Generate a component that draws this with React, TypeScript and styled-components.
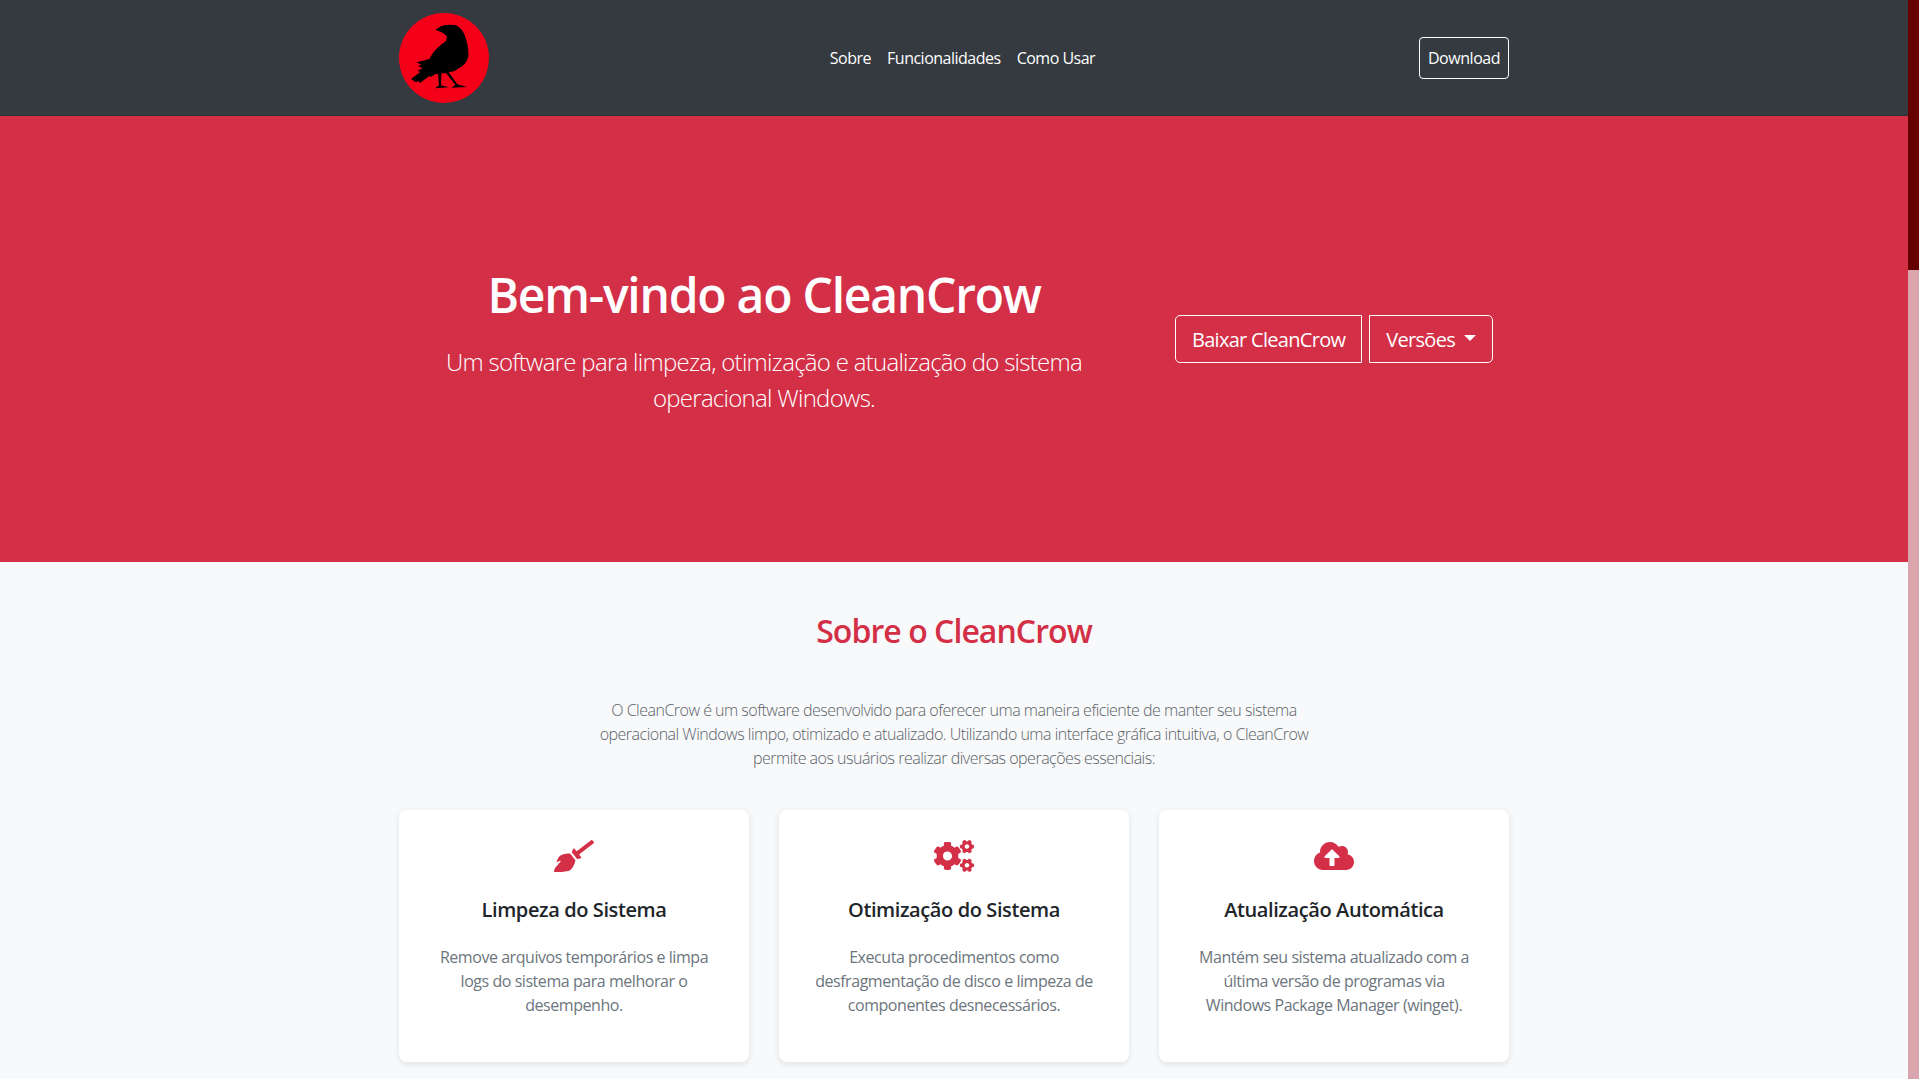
import React from 'react';
import styled, { createGlobalStyle } from 'styled-components';
import { FaBroom, FaCogs, FaCloudUploadAlt } from 'react-icons/fa';

const GlobalStyle = createGlobalStyle`
  html, body {
    margin: 0;
    height: 100%;
    overflow: hidden;
  }
  body {
    font-family: "Open Sans", "Liberation Sans", sans-serif;
    font-size: 16px;
    line-height: 1.5;
    color: #212529;
    background: #f8f9fa;
  }
  * {
    box-sizing: border-box;
  }
`;

const Shell = styled.div`
  display: flex;
  height: 100vh;
`;

const Page = styled.div`
  flex: 1;
  min-width: 0;
  overflow: hidden;
`;

const ScrollTrack = styled.div`
  width: 11px;
  flex: none;
  background: #dba5ad;
`;

const ScrollThumb = styled.div`
  height: 270px;
  background: #660000;
`;

const Container = styled.div`
  width: 1110px;
  margin: 0 auto;
`;

const Navbar = styled.nav`
  height: 116px;
  background: #343a40;
  border-bottom: 1px solid #2c3136;
`;

const NavInner = styled(Container)`
  height: 100%;
  display: flex;
  align-items: center;
  justify-content: space-between;
`;

const Logo = styled.svg`
  width: 90px;
  height: 90px;
  display: block;
`;

const NavLinks = styled.div`
  display: flex;
  gap: 16px;
  margin-left: 17px;
`;

const NavLink = styled.a`
  color: #fff;
  font-size: 16px;
  letter-spacing: -0.5px;
`;

const DownloadButton = styled.a`
  display: block;
  width: 90px;
  height: 42px;
  line-height: 40px;
  text-align: center;
  color: #fff;
  border: 1px solid #fff;
  border-radius: 4px;
  font-size: 16px;
  letter-spacing: -0.45px;
`;

const Hero = styled.header`
  height: 446px;
  background: #d32f47;
  color: #fff;
`;

const HeroInner = styled.div`
  width: 1140px;
  height: 100%;
  margin: 0 auto;
  display: grid;
  grid-template-columns: 760px 380px;
`;

const HeroText = styled.div`
  padding: 150px 15px 0;
  text-align: center;
`;

const HeroTitle = styled.h1`
  margin: 0 0 20px;
  font-size: 48px;
  line-height: 58px;
  font-weight: 600;
  letter-spacing: -1.25px;
`;

const Lead = styled.p`
  margin: 0;
  font-size: 24px;
  line-height: 36px;
  font-weight: 300;
  letter-spacing: -0.72px;
`;

const HeroActions = styled.div`
  display: flex;
  justify-content: center;
  gap: 7px;
  padding-top: 199px;
`;

const OutlineButton = styled.a<{ $side: 'left' | 'right' }>`
  display: flex;
  align-items: center;
  height: 48px;
  padding: 2px 16px 0;
  color: #fff;
  border: 1px solid #fff;
  border-radius: ${(p) => (p.$side === 'left' ? '5px 0 0 5px' : '0 5px 5px 0')};
  font-size: 20px;
  letter-spacing: -0.7px;
`;

const Caret = styled.span`
  width: 0;
  height: 0;
  margin-left: 9px;
  margin-bottom: 5px;
  border-top: 6px solid #fff;
  border-left: 6px solid transparent;
  border-right: 6px solid transparent;
`;

const About = styled.section`
  padding-top: 49px;
  background: #f8f9fa;
`;

const SectionTitle = styled.h2`
  margin: 0 0 47px;
  font-size: 32px;
  line-height: 40px;
  font-weight: 600;
  text-align: center;
  color: #d32f47;
  letter-spacing: -0.95px;
`;

const Intro = styled.p`
  width: 730px;
  margin: 0 auto 40px;
  font-size: 16px;
  line-height: 24px;
  font-weight: 300;
  text-align: center;
  color: #5a6268;
  letter-spacing: -0.5px;
`;

const CardGrid = styled(Container)`
  display: grid;
  grid-template-columns: repeat(3, 350px);
  gap: 30px;
`;

const Card = styled.article`
  height: 252px;
  padding: 24px 32px 0;
  background: #fff;
  border-radius: 8px;
  box-shadow: 0 2px 6px rgba(0, 0, 0, 0.1);
  text-align: center;
`;

const CardIcon = styled.div`
  height: 44px;
  display: flex;
  align-items: center;
  justify-content: center;
  color: #d32f47;
  font-size: 40px;
`;

const CardTitle = styled.h3`
  margin: 17px 0 20px;
  font-size: 20px;
  line-height: 30px;
  font-weight: 600;
  color: #212529;
  letter-spacing: -0.4px;
`;

const CardText = styled.p`
  margin: 0;
  font-size: 16px;
  line-height: 24px;
  color: #6c757d;
  letter-spacing: -0.45px;
`;

const features = [
  {
    icon: <FaBroom />,
    title: 'Limpeza do Sistema',
    text: 'Remove arquivos temporários e limpa logs do sistema para melhorar o desempenho.',
  },
  {
    icon: <FaCogs />,
    title: 'Otimização do Sistema',
    text: 'Executa procedimentos como desfragmentação de disco e limpeza de componentes desnecessários.',
  },
  {
    icon: <FaCloudUploadAlt />,
    title: 'Atualização Automática',
    text: 'Mantém seu sistema atualizado com a última versão de programas via Windows Package Manager (winget).',
  },
];

function CrowLogo() {
  return (
    <Logo viewBox="57 40 270 270">
      <circle cx="192" cy="175" r="135" fill="#f40018" />
      <path
        fill="#000"
        d="M166 90 L184 79 Q205 73 228 77 Q248 86 257 115 Q267 145 265 170 Q260 195 238 205
           L222 215 L206 218 L232 254 L262 262 L214 264 L226 256 L199 221 L184 221 L183 257
           L206 263 L165 266 L177 257 L174 222 L165 224 L152 232 L148 229 L120 250 L116 244 L108 248 L93 238
           L122 216 L112 214 L128 205 L114 200 L124 195 L110 188 L148 178 Q160 150 198 124 L201 110 L188 99 Z"
      />
    </Logo>
  );
}

export default function App() {
  return (
    <Shell>
      <GlobalStyle />
      <Page>
        <Navbar>
          <NavInner>
            <CrowLogo />
            <NavLinks>
              <NavLink>Sobre</NavLink>
              <NavLink>Funcionalidades</NavLink>
              <NavLink>Como Usar</NavLink>
            </NavLinks>
            <DownloadButton>Download</DownloadButton>
          </NavInner>
        </Navbar>
        <Hero>
          <HeroInner>
            <HeroText>
              <HeroTitle>Bem-vindo ao CleanCrow</HeroTitle>
              <Lead>Um software para limpeza, otimização e atualização do sistema operacional Windows.</Lead>
            </HeroText>
            <HeroActions>
              <OutlineButton $side="left">Baixar CleanCrow</OutlineButton>
              <OutlineButton $side="right">
                Versões
                <Caret />
              </OutlineButton>
            </HeroActions>
          </HeroInner>
        </Hero>
        <About>
          <SectionTitle>Sobre o CleanCrow</SectionTitle>
          <Intro>
            O CleanCrow é um software desenvolvido para oferecer uma maneira eficiente de manter seu sistema
            operacional Windows limpo, otimizado e atualizado. Utilizando uma interface gráfica intuitiva, o
            CleanCrow permite aos usuários realizar diversas operações essenciais:
          </Intro>
          <CardGrid>
            {features.map((f) => (
              <Card key={f.title}>
                <CardIcon>{f.icon}</CardIcon>
                <CardTitle>{f.title}</CardTitle>
                <CardText>{f.text}</CardText>
              </Card>
            ))}
          </CardGrid>
        </About>
      </Page>
      <ScrollTrack>
        <ScrollThumb />
      </ScrollTrack>
    </Shell>
  );
}
